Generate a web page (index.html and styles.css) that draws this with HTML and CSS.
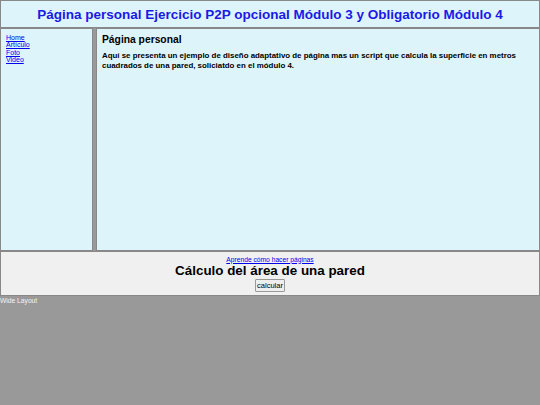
FILE: index.html
```html
<!DOCTYPE html>
<html lang="es">
<head>
<meta charset="utf-8">
<title>Página personal</title>
<link rel="stylesheet" href="styles.css">
</head>
<body>
<header class="top">
  <h1 class="title">Página personal Ejercicio P2P opcional Módulo 3 y Obligatorio Módulo 4</h1>
</header>
<div class="cols">
  <nav class="nav">
    <a href="#">Home</a>
    <a href="#">Artículo</a>
    <a href="#">Foto</a>
    <a href="#">Video</a>
  </nav>
  <main class="main">
    <h2 class="heading">Página personal</h2>
    <p class="text">Aquí se presenta un ejemplo de diseño adaptativo de página mas un script que calcula la superficie en metros cuadrados de una pared, soliciatdo en el módulo 4.</p>
  </main>
</div>
<footer class="foot">
  <a class="foot-link" href="#">Aprende cómo hacer páginas</a>
  <h2 class="calc-title">Cálculo del área de una pared</h2>
  <button class="calc-btn" type="button">calcular</button>
</footer>
<div class="layout">Wide Layout</div>
</body>
</html>
```

FILE: styles.css
```css
html, body {
  margin: 0;
  padding: 0;
}
body {
  background: #999999;
  font-family: "Liberation Sans", Arial, sans-serif;
  width: 540px;
  height: 405px;
  overflow: hidden;
}
.top {
  background: #def4fb;
  border: 1px solid #888888;
  height: 26px;
  display: flex;
  align-items: center;
  justify-content: center;
}
.title {
  margin: 0;
  font-size: 13.5px;
  font-weight: bold;
  color: #1a1ae6;
}
.cols {
  display: flex;
  gap: 3px;
  height: 223px;
}
.nav {
  width: 93px;
  background: #def4fb;
  border: 1px solid #888888;
  display: flex;
  flex-direction: column;
  padding: 5px 0 0 5px;
  box-sizing: border-box;
}
.nav a {
  font-size: 7px;
  line-height: 7.3px;
  color: #0000ee;
}
.main {
  flex: 1;
  background: #def4fb;
  border: 1px solid #888888;
  padding: 5px 5px 0 5px;
}
.heading {
  margin: 0 0 6px 0;
  font-size: 10.3px;
  font-weight: bold;
  color: #000;
}
.text {
  margin: 0;
  font-size: 7.9px;
  line-height: 9.5px;
  font-weight: bold;
  color: #000;
}
.foot {
  background: #f0f0f0;
  border: 1px solid #888888;
  height: 43px;
  display: flex;
  flex-direction: column;
  align-items: center;
  justify-content: center;
}
.foot-link {
  font-size: 6.7px;
  color: #0000ee;
}
.calc-title {
  margin: 0;
  font-size: 13.4px;
  line-height: 16px;
  font-weight: bold;
  color: #000;
}
.calc-btn {
  font-family: "Liberation Sans", Arial, sans-serif;
  font-size: 7.5px;
  line-height: 9px;
  padding: 1px 1px;
  background: #efefef;
  border: 1px solid #999;
  border-radius: 1px;
  color: #000;
}
.layout {
  color: #f4f4f4;
  font-size: 6.7px;
  padding-top: 1px;
}
```
